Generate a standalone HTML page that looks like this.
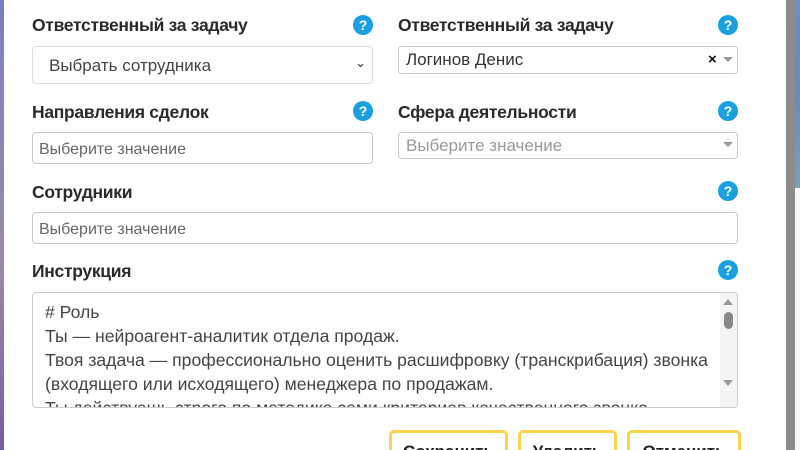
<!DOCTYPE html>
<html><head><meta charset="utf-8"><style>
*{box-sizing:border-box;margin:0;padding:0}
html,body{width:800px;height:450px;overflow:hidden}
body{background:#fff;font-family:"Liberation Sans",sans-serif;position:relative}
.a{position:absolute}
.lbl{font-size:17.5px;font-weight:bold;color:#2a2a2a;letter-spacing:-0.3px}
.q{width:20px;height:20px;border-radius:50%;background:#1aa0e0;color:#fff;font-size:14px;font-weight:bold;text-align:center;line-height:20px}
.inp{border:1px solid #c8c8c8;border-radius:4px;background:#fff;color:#555;font-size:17px;white-space:nowrap}
.btn{border:3px solid #fdd34a;border-radius:5px;background:#fff;font-size:17px;font-weight:bold;color:#222;text-align:center;padding-top:9px}
</style></head><body>
<div class="a" style="left:0;top:0;width:4px;height:450px;background:linear-gradient(#7b7fbf,#9b8aa8 60%,#7a5aa0)"></div>
<div class="a" style="left:786px;top:0;width:9px;height:450px;background:#8c8c8c"></div>
<div class="a" style="left:795px;top:0;width:5px;height:188px;background:linear-gradient(#6e8fc8,#6a8bb8 50%,#7da0b8)"></div>
<div class="a" style="left:795px;top:188px;width:5px;height:262px;background:#f3f8fb"></div>

<div class="a lbl" style="left:32px;top:15px">Ответственный за задачу</div>
<div class="a q" style="left:353px;top:15px">?</div>
<div class="a inp" style="left:32px;top:46px;width:341px;height:38px;padding:9px 0 0 16px;border-color:#ddd;color:#444">Выбрать сотрудника<span class="a" style="right:6px;top:8px;font-size:13px;color:#333">&#8964;</span></div>

<div class="a lbl" style="left:398px;top:15px">Ответственный за задачу</div>
<div class="a q" style="left:718px;top:15px">?</div>
<div class="a inp" style="left:398px;top:46px;width:340px;height:28px;padding:3px 0 0 7px;color:#333">Логинов Денис<span class="a" style="left:309px;top:4px;font-weight:bold;color:#111;font-size:15px">×</span><span class="a" style="left:324px;top:10px;width:0;height:0;border:5px solid transparent;border-top:5px solid #999"></span></div>

<div class="a lbl" style="left:32px;top:102px">Направления сделок</div>
<div class="a q" style="left:353px;top:101px">?</div>
<div class="a inp" style="left:32px;top:132px;width:341px;height:32px;padding:8px 0 0 6px;font-size:16px;color:#666">Выберите значение</div>

<div class="a lbl" style="left:398px;top:102px">Сфера деятельности</div>
<div class="a q" style="left:718px;top:101px">?</div>
<div class="a inp" style="left:398px;top:132px;width:340px;height:27px;padding:3px 0 0 7px;color:#999">Выберите значение<span class="a" style="left:324px;top:9px;width:0;height:0;border:5px solid transparent;border-top:5px solid #999"></span></div>

<div class="a lbl" style="left:32px;top:182px">Сотрудники</div>
<div class="a q" style="left:718px;top:181px">?</div>
<div class="a inp" style="left:32px;top:212px;width:706px;height:32px;padding:8px 0 0 6px;font-size:16px;color:#666">Выберите значение</div>

<div class="a lbl" style="left:32px;top:261px">Инструкция</div>
<div class="a q" style="left:718px;top:260px">?</div>
<div class="a inp" style="left:32px;top:292px;width:706px;height:116px;overflow:hidden;color:#444;border-color:#ccc">
<div style="padding:7px 0 0 12px;line-height:24px;font-size:17.6px">
# Роль<br>Ты — нейроагент-аналитик отдела продаж.<br>Твоя задача — профессионально оценить расшифровку (транскрибация) звонка<br>(входящего или исходящего) менеджера по продажам.<br>Ты действуешь строго по методике семи критериев качественного звонка.</div>
<div class="a" style="right:0;top:0;width:17px;height:114px;background:#f4f4f4"></div>
<div class="a" style="right:4px;top:6px;border:5px solid transparent;border-bottom:6px solid #999;border-top:0"></div>
<div class="a" style="right:4px;top:19px;width:9px;height:17px;border-radius:5px;background:#888"></div>
<div class="a" style="right:4px;top:87px;border:5px solid transparent;border-top:6px solid #999;border-bottom:0"></div>
</div>

<div class="a btn" style="left:389px;top:430px;width:119px;height:36px">Сохранить</div>
<div class="a btn" style="left:518px;top:430px;width:99px;height:36px">Удалить</div>
<div class="a btn" style="left:627px;top:430px;width:114px;height:36px">Отменить</div>
</body></html>
